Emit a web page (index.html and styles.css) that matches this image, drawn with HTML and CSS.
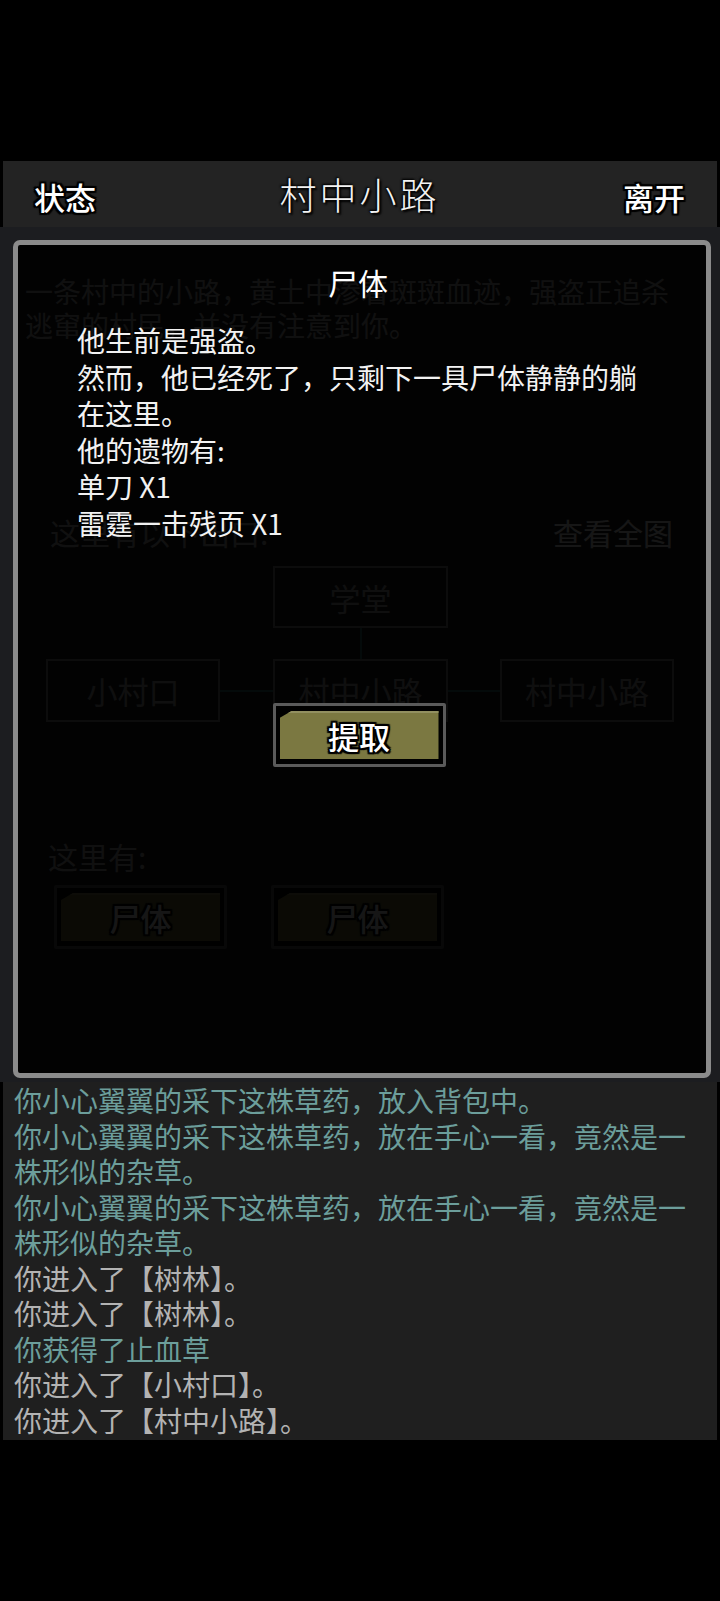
FILE: index.html
```html
<!DOCTYPE html>
<html lang="zh-CN">
<head>
    <meta charset="UTF-8">
    <meta name="viewport" content="width=device-width, initial-scale=1.0">
    <title>村中小路</title>
    <link rel="stylesheet" href="styles.css">
</head>
<body>
    <div class="screen">
        <header class="topbar">
            <span class="bar-btn">状态</span>
            <h1 class="place">村中小路</h1>
            <span class="bar-btn">离开</span>
        </header>

        <div class="scene">
            <p class="desc">一条村中的小路，黄土中渗着斑斑血迹，强盗正追杀逃窜的村民，并没有注意到你。</p>
            <div class="exits-head">
                <span>这里有以下出口:</span>
                <span class="full-map">查看全图</span>
            </div>
            <div class="map">
                <div class="node n-top">学堂</div>
                <div class="vline"></div>
                <div class="node n-left">小村口</div>
                <div class="hline l1"></div>
                <div class="node n-mid">村中小路</div>
                <div class="hline l2"></div>
                <div class="node n-right">村中小路</div>
            </div>
            <div class="here">这里有:</div>
            <div class="things">
                <button class="btn"><span class="btn-face">尸体</span></button>
                <button class="btn"><span class="btn-face">尸体</span></button>
            </div>

            <!-- corpse popup -->
            <div class="dialog">
                <div class="dialog-title">尸体</div>
                <div class="dialog-text">
                    <p>他生前是强盗。</p>
                    <p>然而，他已经死了，只剩下一具尸体静静的躺在这里。</p>
                    <p>他的遗物有:</p>
                    <p>单刀 X1</p>
                    <p>雷霆一击残页 X1</p>
                </div>
                <button class="btn btn-take"><span class="btn-face">提取</span></button>
            </div>
        </div>

        <div class="log">
            <p class="teal">你小心翼翼的采下这株草药，放入背包中。</p>
            <p class="teal">你小心翼翼的采下这株草药，放在手心一看，竟然是一株形似的杂草。</p>
            <p class="teal">你小心翼翼的采下这株草药，放在手心一看，竟然是一株形似的杂草。</p>
            <p>你进入了【树林】。</p>
            <p>你进入了【树林】。</p>
            <p class="teal">你获得了止血草</p>
            <p>你进入了【小村口】。</p>
            <p>你进入了【村中小路】。</p>
        </div>
    </div>
</body>
</html>
```

FILE: styles.css
```css
* {
    box-sizing: border-box;
}
body {
    margin: 0;
    background: #000;
    font-family: "Noto Sans CJK SC", "Noto Sans", sans-serif;
    color: #eee;
}
p {
    margin: 0;
}
.screen {
    width: 720px;
    height: 1601px;
    padding-top: 161px;
}

/* top bar */
.topbar {
    margin: 0 3px;
    height: 66px;
    background: #232323;
    display: flex;
    align-items: center;
    justify-content: space-between;
    padding: 0 32px 0 31px;
}
.bar-btn {
    font-size: 31px;
    font-weight: 500;
    color: #fff;
    padding-top: 5px;
    text-shadow: 2px 0 0 #000, -2px 0 0 #000, 0 2px 0 #000, 0 -2px 0 #000,
        2px 2px 1px #000, -2px -2px 1px #000, 2px -2px 1px #000, -2px 2px 1px #000;
}
.place {
    margin: 0;
    font-size: 37px;
    font-weight: 300;
    letter-spacing: 3px;
    color: #f2f2f2;
    text-shadow: 0 0 3px #000, 2px 2px 2px #000, -1px -1px 2px #000;
}

/* scene behind popup */
.scene {
    position: relative;
    height: 855px;
    background: #1c1d20;
    color: #b8b8b8;
}
.desc {
    font-size: 28px;
    line-height: 34px;
    padding: 47px 35px 0 25px;
}
.exits-head {
    display: flex;
    justify-content: space-between;
    font-size: 30px;
    line-height: 34px;
    margin-top: 173px;
    padding: 0 47px 0 50px;
}
.full-map {
    color: #fff;
}
.map {
    display: grid;
    grid-template-columns: 174px 53px 175px 52px 174px;
    grid-template-rows: 62px 31px 63px;
    margin: 17px 0 0 46px;
}
.node {
    border: 2px solid #8a8a8a;
    display: flex;
    align-items: center;
    justify-content: center;
    font-size: 31px;
    color: #b0b0b0;
}
.n-top { grid-column: 3; grid-row: 1; }
.n-left { grid-column: 1; grid-row: 3; }
.n-mid { grid-column: 3; grid-row: 3; }
.n-right { grid-column: 5; grid-row: 3; }
.vline {
    grid-column: 3;
    grid-row: 2;
    justify-self: center;
    width: 2px;
    background: #2f7a7a;
}
.hline {
    grid-row: 3;
    align-self: center;
    height: 2px;
    background: #2f7a7a;
}
.l1 { grid-column: 2; }
.l2 { grid-column: 4; }
.here {
    font-size: 30px;
    line-height: 34px;
    margin-top: 117px;
    padding-left: 48px;
}
.things {
    display: flex;
    gap: 44px;
    margin-top: 12px;
    padding-left: 54px;
}

/* chamfered olive button */
.btn {
    width: 173px;
    height: 64px;
    border: 3px solid #5a5a5a;
    border-radius: 2px;
    background: #000;
    padding: 5px 4px;
    font-family: inherit;
    cursor: pointer;
}
.btn-face {
    display: flex;
    align-items: center;
    justify-content: center;
    height: 100%;
    background: #7b7841;
    box-shadow: inset 0 2px 0 #929060;
    clip-path: polygon(12px 0, 100% 0, 100% 100%, 0 100%, 0 7px);
    font-size: 31px;
    font-weight: 500;
    color: #fff;
    text-shadow: 2px 0 0 #000, -2px 0 0 #000, 0 2px 0 #000, 0 -2px 0 #000,
        2px 2px 1px #000, -2px -2px 1px #000, 2px -2px 1px #000, -2px 2px 1px #000;
}

/* popup */
.dialog {
    position: absolute;
    top: 13px;
    left: 13px;
    right: 9px;
    bottom: 4px;
    background: rgba(0, 0, 0, 0.915);
    border: 5px solid #8b8b8b;
    border-radius: 7px;
    display: flex;
    flex-direction: column;
    align-items: center;
    padding-top: 17px;
}
.dialog-title {
    font-size: 30px;
    line-height: 40px;
    color: #fff;
    margin-right: 8px;
}
.dialog-text {
    align-self: stretch;
    padding: 0 64px 0 59px;
    margin-top: 20px;
    font-size: 28px;
    line-height: 36.5px;
    color: #f2f2f2;
}
.btn-take {
    margin-top: 162px;
    margin-right: 6px;
}

/* message log */
.log {
    margin: 0 3px;
    height: 358px;
    background: #1f1f1f;
    padding: 1px 23px 0 11px;
    font-size: 28px;
    line-height: 35.5px;
    color: #b3b3b3;
}
.log .teal {
    color: #6c9e9b;
}
```
